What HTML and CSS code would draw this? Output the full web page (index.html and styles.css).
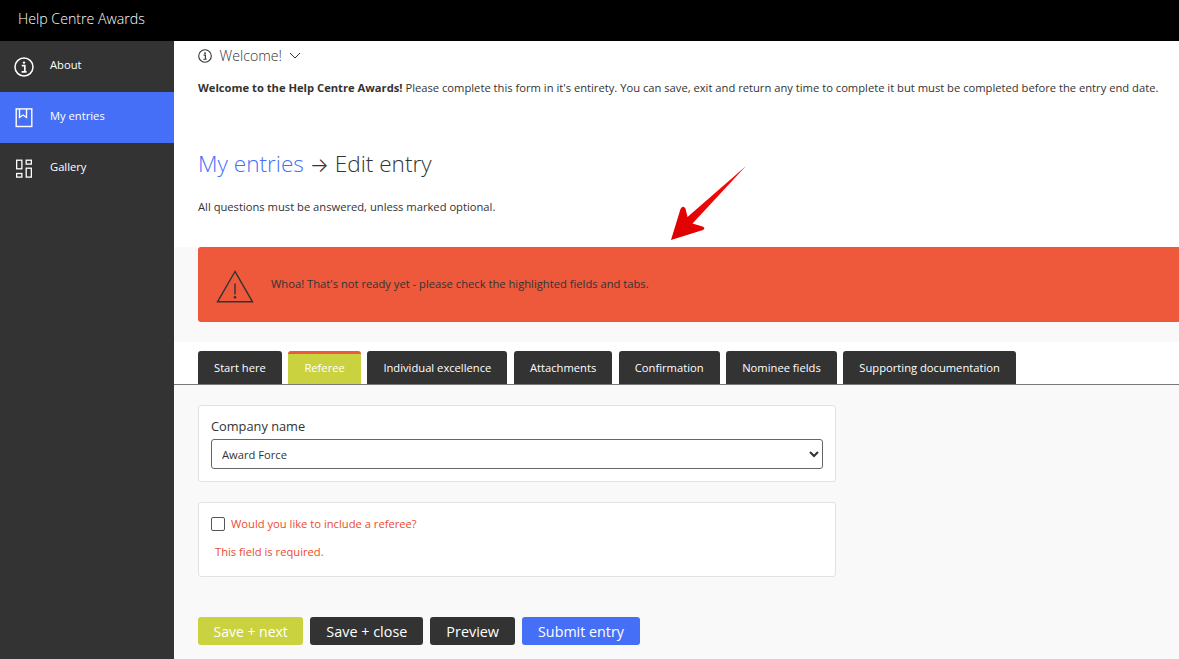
FILE: index.html
```html
<!DOCTYPE html>
<html lang="en">
<head>
<meta charset="utf-8">
<title>Help Centre Awards</title>
<link rel="stylesheet" href="styles.css">
</head>
<body>
<header class="topbar">Help Centre Awards</header>
<div class="shell">
  <nav class="sidebar">
    <a class="nav-item">
      <svg class="nav-icon" viewBox="0 0 22 22" fill="none" stroke="#fff"><circle cx="11" cy="11" r="9" stroke-width="1.5"/><circle cx="11" cy="6.6" r="1.2" fill="#fff" stroke="none"/><path d="M8.8 9.6h3v6M8.6 15.8h5" stroke-width="1.7"/></svg>
      <span>About</span>
    </a>
    <a class="nav-item active">
      <svg class="nav-icon" viewBox="0 0 22 22" fill="none" stroke="#fff" stroke-width="1.4"><rect x="3.2" y="1.9" width="15.6" height="17.6"/><path d="M6.5 2v8.5l3.5-2.5 3.5 2.5V2"/></svg>
      <span>My entries</span>
    </a>
    <a class="nav-item">
      <svg class="nav-icon" viewBox="0 0 22 22" fill="none" stroke="#fff" stroke-width="1.3"><rect x="3.65" y="2.2" width="5.2" height="8.6"/><rect x="13.2" y="2.2" width="5.15" height="3.9"/><rect x="3.65" y="15.5" width="5.2" height="3.6"/><rect x="13.2" y="10.2" width="5.15" height="8.9"/></svg>
      <span>Gallery</span>
    </a>
  </nav>
  <main class="main">
    <section class="intro">
      <div class="welcome">
        <svg class="welcome-icon" viewBox="0 0 14 14" fill="none" stroke="#333"><circle cx="7" cy="7" r="6.3" stroke-width="1.1"/><circle cx="7" cy="4.2" r=".9" fill="#333" stroke="none"/><path d="M5.6 6.1h1.8v4M5.4 10.2h3.2" stroke-width="1.1"/></svg>
        <span>Welcome!</span>
        <svg class="chevron" viewBox="0 0 12 7" fill="none" stroke="#333" stroke-width="1"><path d="M1 1l5 5 5-5"/></svg>
      </div>
      <p class="welcome-text"><strong>Welcome to the Help Centre Awards!</strong> Please complete this form in it's entirety. You can save, exit and return any time to complete it but must be completed before the entry end date.</p>
      <h1 class="title"><a class="title-link">My entries</a> <span class="title-arrow">→</span> Edit entry</h1>
      <p class="note">All questions must be answered, unless marked optional.</p>
    </section>
    <section class="alert-band">
      <div class="alert">
        <svg class="alert-icon" viewBox="0 0 38 34" fill="none" stroke="#333" stroke-width="1.4"><path d="M19 2.5L1.5 32.8h35z" stroke-linejoin="miter"/><path d="M19 14.5v11"/><circle cx="19" cy="28.2" r="1.3" fill="#333" stroke="none"/></svg>
        <span>Whoa! That's not ready yet - please check the highlighted fields and tabs.</span>
      </div>
    </section>
    <div class="tabs">
      <a class="tab">Start here</a>
      <a class="tab tab-error">Referee</a>
      <a class="tab">Individual excellence</a>
      <a class="tab">Attachments</a>
      <a class="tab">Confirmation</a>
      <a class="tab">Nominee fields</a>
      <a class="tab">Supporting documentation</a>
    </div>
    <section class="form">
      <div class="card card-select">
        <label class="field-label" for="company">Company name</label>
        <select class="select" id="company"><option>Award Force</option></select>
      </div>
      <div class="card card-check">
        <label class="check-row"><input type="checkbox" class="check"><span>Would you like to include a referee?</span></label>
        <p class="error">This field is required.</p>
      </div>
      <div class="actions">
        <button class="btn btn-lime">Save + next</button>
        <button class="btn btn-dark">Save + close</button>
        <button class="btn btn-dark">Preview</button>
        <button class="btn btn-blue">Submit entry</button>
      </div>
    </section>
  </main>
</div>
<svg class="arrow" viewBox="0 0 90 84" aria-hidden="true">
  <defs><linearGradient id="arrowFill" x1="1" y1="0" x2="0" y2="1"><stop offset="0" stop-color="#ff0a0a"/><stop offset="1" stop-color="#dc0000"/></linearGradient></defs>
  <path d="M82 2L28.5 59.5 38.5 62.5Q42 64 39 66L7 76 16.5 45Q19 41 21.5 44.5L23.5 53Z" fill="url(#arrowFill)"/>
</svg>
</body>
</html>
```
FILE: styles.css
```css
* { box-sizing: border-box; }
html, body { margin: 0; height: 100%; overflow: hidden; }
body { font-family: "Open Sans", sans-serif; color: #333; background: #fff; position: relative; }
a { text-decoration: none; }

.topbar { height: 41px; background: #000; color: #fff; font-size: 14.2px; font-weight: 300; line-height: 38px; padding-left: 18px; }
.shell { display: flex; height: 618px; }

.sidebar { width: 174px; flex: none; background: #333; }
.nav-item { display: flex; align-items: center; height: 51px; padding-left: 13px; gap: 15px; color: #fff; font-size: 11.2px; }
.nav-item span { margin-bottom: 4px; }
.nav-item.active { background: #456ff7; }
.nav-icon { width: 22px; height: 22px; flex: none; }

.main { flex: 1; min-width: 0; background: #f9f9f9; }
.intro { background: #fff; height: 206px; padding: 0 0 0 24px; }
.welcome { display: flex; align-items: center; height: 29px; font-size: 14.2px; font-weight: 300; gap: 7.5px; }
.welcome-icon { width: 14px; height: 14px; flex: none; }
.chevron { width: 12px; height: 7px; }
.welcome-text { margin: 10px 0 0; font-size: 11.2px; line-height: 16px; white-space: nowrap; }
.title { margin: 52px 0 0; font-size: 22.6px; font-weight: 300; line-height: 32px; white-space: nowrap; }
.title-link { color: #456ff7; }
.title-arrow { font-family: "Inter", sans-serif; font-weight: 300; font-size: 20px; }
.note { margin: 18px 0 0; font-size: 11.2px; line-height: 16px; }

.alert-band { height: 95px; padding-left: 24px; }
.alert { display: flex; align-items: center; height: 75px; background: #ee593b; border-radius: 3px 0 0 3px; padding: 0 0 2px 18px; gap: 17px; font-size: 11.2px; }
.alert-icon { width: 38px; height: 34px; flex: none; margin-top: 5px; }

.tabs { display: flex; align-items: flex-end; gap: 6.6px; height: 43px; background: #fff; padding-left: 24px; border-bottom: 1px solid #777; }
.tab { display: flex; align-items: center; height: 33px; padding: 0 16px; background: #333; color: #fff; font-size: 11.2px; border-radius: 3px 3px 0 0; }
.tab-error { background: #cbd23f; border-top: 3px solid #ee593b; padding-bottom: 3px; }

.form { padding: 20px 0 0 24px; }
.card { width: 638px; background: #fff; border: 1px solid #e2e2e2; border-radius: 3px; padding: 0 12px; }
.card-select { height: 77px; padding-top: 11px; }
.field-label { display: block; font-size: 12.8px; line-height: 18px; margin-bottom: 4px; }
.select { display: block; width: 100%; height: 30px; font: 11.2px "Open Sans", sans-serif; color: #333; background: #fff; border: 1px solid #666; border-radius: 3px; padding: 0 6px; }
.card-check { height: 75px; margin-top: 20px; padding-top: 13px; }
.check-row { display: flex; align-items: center; gap: 6px; color: #ee4a2e; font-size: 11.2px; line-height: 16px; }
.check { appearance: none; margin: 0; width: 14px; height: 14px; background: #fff; border: 1px solid #555; border-radius: 2px; }
.error { margin: 12px 0 0 4px; color: #ee4a2e; font-size: 11.2px; line-height: 16px; }

.actions { display: flex; gap: 7px; margin-top: 40px; }
.btn { height: 28px; padding: 0 16px; border: 0; border-radius: 3px; color: #fff; font: 14.4px "Open Sans", sans-serif; }
.btn-lime { background: #cbd23f; font-size: 14px; padding: 0 15.5px; }
.btn-dark { background: #333; }
.btn-blue { background: #456ff7; font-size: 14.3px; }

.arrow { position: absolute; left: 664px; top: 164px; width: 90px; height: 84px; }
```
